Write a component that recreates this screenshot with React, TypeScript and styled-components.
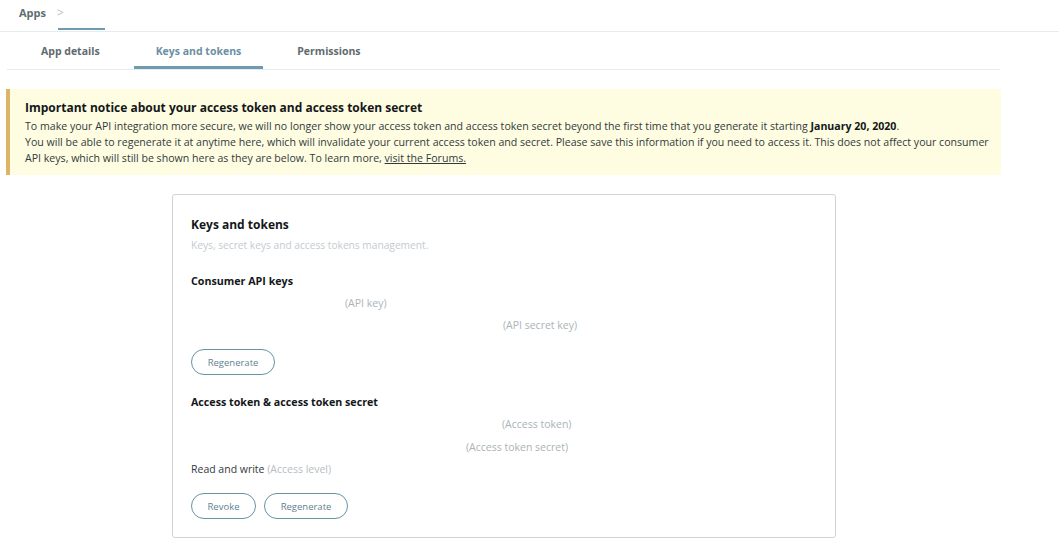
import React from "react";
import styled, { createGlobalStyle } from "styled-components";

const GlobalStyle = createGlobalStyle`
  html, body { margin: 0; padding: 0; background: #ffffff; }
  body { font-family: "Open Sans", "Noto Sans", sans-serif; color: #14171a; }
  * { box-sizing: border-box; }
`;

const Page = styled.div`
  width: 1059px;
  display: flex;
  flex-direction: column;
`;

const Breadcrumbs = styled.nav`
  height: 32px;
  border-bottom: 1px solid #e6ecee;
  display: flex;
  align-items: stretch;
  padding-left: 19px;
`;

const Crumb = styled.span`
  font-size: 11px;
  font-weight: 700;
  color: #5d6d70;
  display: flex;
  align-items: center;
  padding-bottom: 6px;
`;

const Chevron = styled.span`
  color: #b8c0c3;
  font-size: 12px;
  margin-left: 11px;
  display: flex;
  align-items: center;
  padding-bottom: 6px;
`;

const CurrentCrumb = styled.span`
  width: 47px;
  margin-left: -6px;
  border-bottom: 2px solid #6f9bb0;
  margin-bottom: 1px;
`;

const Tabs = styled.div`
  margin: 0 59px 0 7px;
  height: 38px;
  border-bottom: 1px solid #e6ecee;
  display: flex;
  gap: 12px;
  padding-left: 12px;
`;

const Tab = styled.div<{ $active?: boolean }>`
  padding: 3px 22px 0;
  display: flex;
  align-items: center;
  font-size: 10.5px;
  font-weight: 700;
  color: ${(p) => (p.$active ? "#6a90a3" : "#5f6b6e")};
  border-bottom: 3px solid ${(p) => (p.$active ? "#6f9bb0" : "transparent")};
`;

const Notice = styled.div`
  margin: 19px 58px 0 6px;
  background: #fefde1;
  border-left: 4px solid #dcb567;
  padding: 10px 2px 9px 15px;
  height: 86px;
`;

const NoticeTitle = styled.div`
  font-size: 12px;
  font-weight: 700;
  line-height: 18px;
  color: #14171a;
`;

const NoticeText = styled.p`
  margin: 1px 0 0;
  font-size: 10.6px;
  line-height: 16px;
  color: #333a3d;

  b { font-weight: 700; color: #14171a; }
  a { color: #333a3d; text-decoration: underline; }
`;

const Card = styled.section`
  margin: 19px 0 0 172px;
  width: 664px;
  border: 1px solid #cfd3d1;
  border-radius: 3px;
  padding: 21px 19px 18px 18px;
  display: flex;
  flex-direction: column;
`;

const CardTitle = styled.h2`
  margin: 0;
  font-size: 12px;
  font-weight: 700;
  line-height: 18px;
  color: #14171a;
`;

const CardSubtitle = styled.div`
  margin-top: 3px;
  font-size: 10.2px;
  line-height: 16px;
  color: #c3cbcf;
`;

const SectionTitle = styled.h3<{ $top: number }>`
  margin: ${(p) => p.$top}px 0 0;
  font-size: 10.7px;
  font-weight: 700;
  line-height: 16px;
  color: #14171a;
`;

const KeyRow = styled.div<{ $indent: number; $top?: number }>`
  margin-top: ${(p) => p.$top ?? 6}px;
  padding-left: ${(p) => p.$indent}px;
  font-size: 10.5px;
  line-height: 16px;
  color: #aab4b8;
`;

const LevelRow = styled.div`
  margin-top: 6px;
  font-size: 10.5px;
  line-height: 16px;
  color: #333a3d;

  span { color: #b5bec2; }
`;

const ButtonRow = styled.div`
  margin-top: 16px;
  display: flex;
  gap: 8px;
`;

const PillButton = styled.button<{ $width: number }>`
  width: ${(p) => p.$width}px;
  height: 26px;
  border: 1px solid #6493a5;
  border-radius: 13px;
  background: #ffffff;
  font-family: inherit;
  font-size: 9.5px;
  color: #5f8190;
  padding: 0;
  cursor: pointer;
`;

export default function App() {
  return (
    <Page>
      <GlobalStyle />
      <Breadcrumbs>
        <Crumb>Apps</Crumb>
        <Chevron>&gt;</Chevron>
        <CurrentCrumb />
      </Breadcrumbs>
      <Tabs>
        <Tab>App details</Tab>
        <Tab $active>Keys and tokens</Tab>
        <Tab>Permissions</Tab>
      </Tabs>
      <Notice>
        <NoticeTitle>Important notice about your access token and access token secret</NoticeTitle>
        <NoticeText>
          To make your API integration more secure, we will no longer show your access token and access token secret beyond the first time that you generate it starting <b>January 20, 2020</b>.
          <br />
          You will be able to regenerate it at anytime here, which will invalidate your current access token and secret. Please save this information if you need to access it. This does not affect your consumer API keys, which will still be shown here as they are below. To learn more, <a href="#">visit the Forums.</a>
        </NoticeText>
      </Notice>
      <Card>
        <CardTitle>Keys and tokens</CardTitle>
        <CardSubtitle>Keys, secret keys and access tokens management.</CardSubtitle>
        <SectionTitle $top={20}>Consumer API keys</SectionTitle>
        <KeyRow $indent={154}>(API key)</KeyRow>
        <KeyRow $indent={312}>(API secret key)</KeyRow>
        <ButtonRow>
          <PillButton $width={84}>Regenerate</PillButton>
        </ButtonRow>
        <SectionTitle $top={19}>Access token &amp; access token secret</SectionTitle>
        <KeyRow $indent={311}>(Access token)</KeyRow>
        <KeyRow $indent={275} $top={7}>(Access token secret)</KeyRow>
        <LevelRow>
          Read and write <span>(Access level)</span>
        </LevelRow>
        <ButtonRow>
          <PillButton $width={65}>Revoke</PillButton>
          <PillButton $width={84}>Regenerate</PillButton>
        </ButtonRow>
      </Card>
    </Page>
  );
}
